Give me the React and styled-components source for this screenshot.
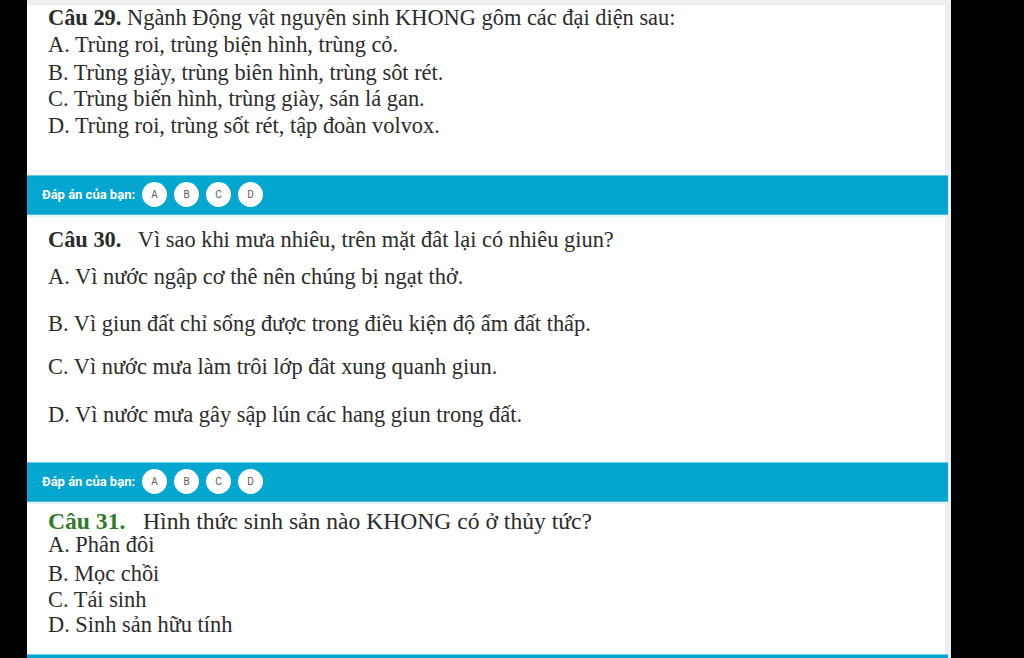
import React from 'react';
import styled, { createGlobalStyle } from 'styled-components';

const GlobalStyle = createGlobalStyle`
  html, body {
    margin: 0;
    background: #000;
  }
  body {
    font-family: "Liberation Serif", "Times New Roman", serif;
  }
`;

const Screen = styled.div`
  width: 1024px;
  height: 658px;
  overflow: hidden;
  background: #000;
  display: flex;
`;

const Sheet = styled.div`
  margin-left: 27px;
  width: 924px;
  box-sizing: border-box;
  padding-top: 5px;
  padding-right: 6px;
  background: #eceef1;
  display: flex;
  flex-direction: column;

  & > * {
    flex-shrink: 0;
  }
`;

const Card = styled.section`
  background: #fff;
  color: #2b2b2b;
  padding: ${(p) => p.$pt}px 0 ${(p) => p.$pb}px 21px;
`;

const Title = styled.div`
  font-size: ${(p) => p.$size}px;
  line-height: ${(p) => p.$lh}px;
  white-space: pre;
`;

const Num = styled.b`
  color: ${(p) => p.$color || 'inherit'};
`;

const Option = styled.div`
  font-size: ${(p) => p.$size}px;
  line-height: ${(p) => p.$lh}px;
  margin-top: ${(p) => p.$mt || 0}px;
`;

const AnswerBar = styled.div`
  height: 38px;
  margin-right: -3px;
  margin-bottom: 2px;
  background: #02a6cf;
  border-top: 1px solid #6cc9e2;
  border-bottom: 1px solid #4dbedc;
  box-shadow: 0 2px 0 #e2f3f8;
  display: flex;
  align-items: center;
  padding-left: 15px;
  gap: 7px;
`;

const BarLabel = styled.span`
  font-family: Roboto, "Liberation Sans", sans-serif;
  font-weight: 700;
  font-size: 13px;
  color: #fff;
`;

const Choice = styled.span`
  width: 25px;
  height: 25px;
  border-radius: 50%;
  background: #fff;
  color: #5a5a5a;
  font-family: Roboto, "Liberation Sans", sans-serif;
  font-size: 10px;
  display: flex;
  align-items: center;
  justify-content: center;
`;

const questions = [
  {
    num: 'Câu 29.',
    sep: ' ',
    text: 'Ngành Động vật nguyên sinh KHONG gôm các đại diện sau:',
    size: 22.4,
    pt: 0,
    pb: 35.5,
    lh: 26.5,
    options: [
      ['A. Trùng roi, trùng biện hình, trùng cỏ.', 0.5],
      ['B. Trùng giày, trùng biên hình, trùng sôt rét.', 1.5],
      ['C. Trùng biến hình, trùng giày, sán lá gan.', 0],
      ['D. Trùng roi, trùng sốt rét, tập đoàn volvox.', 0],
    ],
  },
  {
    num: 'Câu 30.',
    sep: '   ',
    text: 'Vì sao khi mưa nhiêu, trên mặt đât lại có nhiêu giun?',
    size: 22.4,
    pt: 10,
    pb: 34,
    lh: 26,
    options: [
      ['A. Vì nước ngập cơ thê nên chúng bị ngạt thở.', 11],
      ['B. Vì giun đất chỉ sống được trong điều kiện độ ẩm đất thấp.', 21.5],
      ['C. Vì nước mưa làm trôi lớp đât xung quanh giun.', 17],
      ['D. Vì nước mưa gây sập lún các hang giun trong đất.', 21.5],
    ],
  },
  {
    num: 'Câu 31.',
    sep: '   ',
    color: '#2f7a2a',
    text: 'Hình thức sinh sản nào KHONG có ở thủy tức?',
    size: 22.4,
    titleSize: 23.6,
    titleLh: 22,
    pt: 6,
    pb: 16,
    lh: 26,
    options: [
      ['A. Phân đôi', 0],
      ['B. Mọc chồi', 3],
      ['C. Tái sinh', 0],
      ['D. Sinh sản hữu tính', -1],
    ],
  },
];

const Bar = ({ empty }) => (
  <AnswerBar>
    {!empty && (
      <>
        <BarLabel>Đáp án của bạn:</BarLabel>
        {['A', 'B', 'C', 'D'].map((c) => (
          <Choice key={c}>{c}</Choice>
        ))}
      </>
    )}
  </AnswerBar>
);

export default function App() {
  return (
    <Screen>
      <GlobalStyle />
      <Sheet>
        {questions.map((q, i) => (
          <React.Fragment key={q.num}>
            <Card $pt={q.pt} $pb={q.pb}>
              <Title $size={q.titleSize || q.size} $lh={q.titleLh || 26}>
                <Num $color={q.color}>{q.num}</Num>
                {q.sep}
                {q.text}
              </Title>
              {q.options.map(([text, mt]) => (
                <Option key={text} $size={q.size} $lh={q.lh} $mt={mt}>
                  {text}
                </Option>
              ))}
            </Card>
            <Bar empty={i === questions.length - 1} />
          </React.Fragment>
        ))}
      </Sheet>
    </Screen>
  );
}
